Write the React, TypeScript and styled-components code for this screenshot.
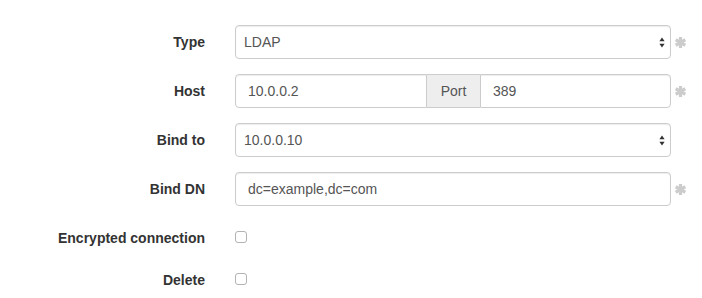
import React from "react";
import styled, { createGlobalStyle } from "styled-components";

const Global = createGlobalStyle`
  html, body { margin: 0; padding: 0; background: #fff; }
  body { font-family: "Liberation Sans", Arial, sans-serif; font-size: 14px; line-height: 20px; color: #333; }
  * { box-sizing: border-box; }
`;

const Form = styled.form`
  display: flex;
  flex-direction: column;
  gap: 15px;
  padding-top: 25px;
  width: 702px;
`;

const Row = styled.div`
  display: flex;
  align-items: flex-start;
`;

const Label = styled.label`
  width: 220px;
  padding-right: 15px;
  padding-top: 7px;
  text-align: right;
  font-weight: bold;
  font-size: 14px;
  line-height: 20px;
  color: #333;
`;

const Control = styled.div<{ $check?: boolean }>`
  margin-left: 15px;
  width: 436px;
  display: flex;
  min-height: ${(p) => (p.$check ? "27px" : "34px")};
  padding-top: ${(p) => (p.$check ? "10px" : "0")};
`;

const SelectBox = styled.div`
  position: relative;
  flex: 1;
  height: 34px;
  border: 1px solid #ccc;
  border-radius: 4px;
  background: #fff;
  box-shadow: inset 0 1px 1px rgba(0, 0, 0, 0.075);
  padding: 6px 8px;
  font-size: 14px;
  line-height: 20px;
  color: #555;
`;

const Arrows = styled.svg`
  position: absolute;
  right: 5px;
  top: 11px;
`;

const Input = styled.input<{ $pos?: "first" | "last" | "only" }>`
  flex: 1;
  min-width: 0;
  height: 34px;
  border: 1px solid #ccc;
  border-radius: ${(p) =>
    p.$pos === "first" ? "4px 0 0 4px" : p.$pos === "last" ? "0 4px 4px 0" : "4px"};
  box-shadow: inset 0 1px 1px rgba(0, 0, 0, 0.075);
  padding: 6px 12px;
  font-family: "Liberation Sans", Arial, sans-serif;
  font-size: 14px;
  line-height: 20px;
  color: #555;
  background: #fff;
  outline: none;
`;

const Addon = styled.span`
  flex: 0 0 53px;
  height: 34px;
  padding: 6px 0;
  text-align: center;
  border: 1px solid #ccc;
  border-left: 0;
  border-right: 0;
  background: #eee;
  color: #555;
  font-size: 14px;
  line-height: 20px;
`;

const HostInput = styled(Input)`
  flex: 0 0 192px;
`;

const Required = styled.span`
  display: flex;
  align-items: center;
  height: 34px;
  margin-left: 4px;
`;

const Check = styled.input`
  appearance: none;
  -webkit-appearance: none;
  margin: 0;
  width: 12px;
  height: 12px;
  border: 1px solid #b3b3b3;
  border-radius: 3px;
  background: #fff;
`;

const Asterisk = () => (
  <Required>
    <svg width="11" height="11" viewBox="0 0 11 11">
      <g stroke="#cccccc" strokeWidth="3.2" strokeLinecap="butt">
        <line x1="5.5" y1="0" x2="5.5" y2="11" />
        <line x1="0.7" y1="2.75" x2="10.3" y2="8.25" />
        <line x1="0.7" y1="8.25" x2="10.3" y2="2.75" />
      </g>
    </svg>
  </Required>
);

const Select = ({ value }: { value: string }) => (
  <SelectBox>
    {value}
    <Arrows width="6" height="11" viewBox="0 0 6 11">
      <path d="M3 0.5 L5.6 4.2 L0.4 4.2 Z" fill="#333" />
      <path d="M3 10.5 L5.6 6.8 L0.4 6.8 Z" fill="#333" />
    </Arrows>
  </SelectBox>
);

export default function App() {
  return (
    <>
      <Global />
      <Form>
        <Row>
          <Label>Type</Label>
          <Control>
            <Select value="LDAP" />
          </Control>
          <Asterisk />
        </Row>
        <Row>
          <Label>Host</Label>
          <Control>
            <HostInput $pos="first" defaultValue="10.0.0.2" />
            <Addon>Port</Addon>
            <Input $pos="last" defaultValue="389" />
          </Control>
          <Asterisk />
        </Row>
        <Row>
          <Label>Bind to</Label>
          <Control>
            <Select value="10.0.0.10" />
          </Control>
        </Row>
        <Row>
          <Label>Bind DN</Label>
          <Control>
            <Input $pos="only" defaultValue="dc=example,dc=com" />
          </Control>
          <Asterisk />
        </Row>
        <Row>
          <Label>Encrypted connection</Label>
          <Control $check>
            <Check type="checkbox" />
          </Control>
        </Row>
        <Row>
          <Label>Delete</Label>
          <Control $check>
            <Check type="checkbox" />
          </Control>
        </Row>
      </Form>
    </>
  );
}
